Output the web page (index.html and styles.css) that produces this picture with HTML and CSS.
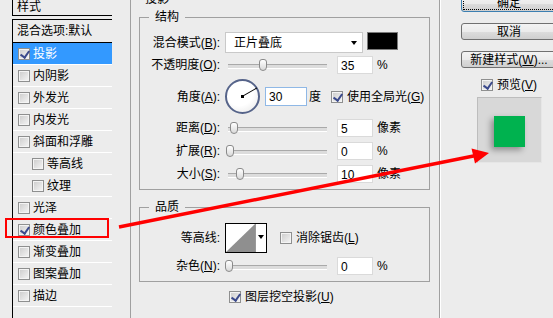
FILE: index.html
```html
<!DOCTYPE html>
<html lang="zh-CN">
<head>
    <meta charset="UTF-8">
    <title>图层样式</title>
    <link rel="stylesheet" href="styles.css">
</head>
<body>
    <div class="dialog">
        <!-- style list on the left -->
        <aside class="styles-col">
            <div class="styles-head">样式</div>
            <ul class="styles-list">
                <li class="blend">混合选项:默认</li>
                <li class="selected"><span class="cb checked"></span>投影</li>
                <li><span class="cb"></span>内阴影</li>
                <li><span class="cb"></span>外发光</li>
                <li><span class="cb"></span>内发光</li>
                <li><span class="cb"></span>斜面和浮雕</li>
                <li class="sub"><span class="cb"></span>等高线</li>
                <li class="sub"><span class="cb"></span>纹理</li>
                <li><span class="cb"></span>光泽</li>
                <li><span class="cb checked"></span>颜色叠加</li>
                <li><span class="cb"></span>渐变叠加</li>
                <li><span class="cb"></span>图案叠加</li>
                <li><span class="cb"></span>描边</li>
                <li></li>
            </ul>
        </aside>

        <!-- drop shadow settings -->
        <main class="settings">
            <fieldset class="group outer">
                <legend>投影</legend>
                <fieldset class="group structure">
                    <legend>结构</legend>
                    <div class="row r-mode">
                        <span class="lbl">混合模式(<u>B</u>):</span>
                        <span class="select">正片叠底<span class="arrow"></span></span>
                        <span class="swatch"></span>
                    </div>
                    <div class="row r-opacity">
                        <span class="lbl">不透明度(<u>O</u>):</span>
                        <span class="slider"><span class="thumb" style="left: 34px;"></span></span>
                        <span class="field">35</span>
                        <span class="unit">%</span>
                    </div>
                    <div class="row r-angle">
                        <span class="lbl">角度(<u>A</u>):</span>
                        <span class="dial"><span class="hand"></span><span class="dot"></span></span>
                        <span class="field wide focus">30</span>
                        <span class="unit deg">度</span>
                        <span class="cb checked"></span>
                        <span class="cb-text">使用全局光(<u>G</u>)</span>
                    </div>
                    <div class="row r-slide">
                        <span class="lbl">距离(<u>D</u>):</span>
                        <span class="slider"><span class="thumb" style="left: 5px;"></span></span>
                        <span class="field">5</span>
                        <span class="unit">像素</span>
                    </div>
                    <div class="row r-slide">
                        <span class="lbl">扩展(<u>R</u>):</span>
                        <span class="slider"><span class="thumb" style="left: 1px;"></span></span>
                        <span class="field">0</span>
                        <span class="unit">%</span>
                    </div>
                    <div class="row r-slide">
                        <span class="lbl">大小(<u>S</u>):</span>
                        <span class="slider"><span class="thumb" style="left: 11px;"></span></span>
                        <span class="field">10</span>
                        <span class="unit">像素</span>
                    </div>
                </fieldset>

                <fieldset class="group quality">
                    <legend>品质</legend>
                    <div class="row r-contour">
                        <span class="lbl">等高线:</span>
                        <span class="contour">
                            <span class="curve">
                                <svg width="29" height="28" viewBox="0 0 29 28"><polygon points="0,28 29,0 29,28" fill="#8f8f8f"/></svg>
                            </span>
                            <span class="drop"><span class="arrow"></span></span>
                        </span>
                        <span class="cb aa"></span>
                        <span class="cb-text">消除锯齿(<u>L</u>)</span>
                    </div>
                    <div class="row r-slide">
                        <span class="lbl">杂色(<u>N</u>):</span>
                        <span class="slider"><span class="thumb" style="left: 0px;"></span></span>
                        <span class="field">0</span>
                        <span class="unit">%</span>
                    </div>
                </fieldset>

                <div class="knockout">
                    <span class="cb checked"></span>
                    <span class="cb-text">图层挖空投影(<u>U</u>)</span>
                </div>
            </fieldset>
        </main>

        <!-- buttons and preview -->
        <div class="actions">
            <button class="btn default"><span>确定</span></button>
            <button class="btn">取消</button>
            <button class="btn">新建样式(<u>W</u>)...</button>
            <div class="preview-check">
                <span class="cb checked"></span>
                <span class="cb-text">预览(<u>V</u>)</span>
            </div>
            <div class="preview">
                <div class="chip"></div>
            </div>
        </div>
    </div>

    <!-- red annotation drawn over the dialog -->
    <div class="mark"></div>
    <svg class="annot" width="553" height="318" viewBox="0 0 553 318">
        <line x1="119" y1="227" x2="476" y2="155.5" stroke="#ff0000" stroke-width="3.5"/>
        <polygon points="471.5,148.5 489,153 475,163.5" fill="#ff0000"/>
    </svg>
</body>
</html>
```

FILE: styles.css
```css
* {
    box-sizing: border-box;
}

body {
    margin: 0;
    width: 553px;
    height: 318px;
    overflow: hidden;
    position: relative;
    background-color: #ececec;
    color: #000;
    font-family: "Liberation Sans", "Noto Sans CJK SC", sans-serif;
    font-size: 12px;
    line-height: 14px;
}

u {
    text-decoration: underline;
}

.dialog {
    display: flex;
    height: 318px;
}

/* left list */
.styles-col {
    width: 128px;
    flex: none;
    padding-left: 12px;
}

.styles-head {
    width: 100px;
    height: 16px;
    padding-left: 4px;
    border-left: 1px solid #000;
    border-bottom: 1px solid #000;
}

.styles-list {
    list-style: none;
    margin: 3px 0 0;
    padding: 0;
    width: 100px;
    border-top: 1px solid #000;
    border-left: 1px solid #000;
}

.styles-list li {
    display: flex;
    align-items: center;
    gap: 3px;
    height: 22px;
    padding-left: 5px;
    border-bottom: 1px solid #fff;
}

.styles-list li.blend {
    height: 23px;
    padding-left: 4px;
    border-bottom-color: #000;
}

.styles-list li.sub {
    padding-left: 19px;
}

.styles-list li.selected {
    background-color: #3399ff;
    color: #fff;
}

/* checkbox */
.cb {
    display: inline-block;
    flex: none;
    width: 12px;
    height: 12px;
    border: 1px solid #8e8f8f;
    background: linear-gradient(135deg, #cbcbcb, #f6f6f6);
    box-shadow: inset 0 0 0 1px #f4f4f4;
    position: relative;
}

.cb.checked::after {
    content: "";
    position: absolute;
    left: 3px;
    top: 0px;
    width: 4px;
    height: 7px;
    border-right: 2px solid #3b4a8c;
    border-bottom: 2px solid #3b4a8c;
    transform: rotate(35deg);
}

.cb-text {
    margin-left: 4px;
}

/* main settings */
.settings {
    width: 312px;
    flex: none;
}

.group {
    margin: 0;
    border: 1px solid #a0a0a0;
    min-width: 0;
}

.group legend {
    padding: 0 6px;
    line-height: 14px;
}

.outer {
    margin: -8px 0 0 2px;
    height: 340px;
    padding: 4px 9px 0 8px;
}

.outer > legend {
    margin-left: 0;
}

.structure,
.quality {
    padding: 8px 0 4px;
}

.structure > legend,
.quality > legend {
    margin-left: 9px;
}

.quality {
    margin-top: 10px;
    padding-bottom: 2px;
}

.row {
    display: flex;
    align-items: center;
    height: 23px;
}

.lbl {
    width: 80px;
    margin-right: 5px;
    text-align: right;
    flex: none;
}

.r-mode {
    height: 21px;
}

.r-opacity {
    height: 24px;
}

.r-angle {
    height: 39px;
}

.r-contour {
    height: 31px;
}

.r-slide:last-child {
    height: 26px;
}

.structure .r-slide:last-child {
    height: 23px;
}

.select {
    position: relative;
    width: 138px;
    height: 21px;
    padding: 3px 0 0 8px;
    background-color: #fff;
    border: 1px solid #c9c9c9;
}

.arrow {
    position: absolute;
    width: 0;
    height: 0;
    border-left: 3px solid transparent;
    border-right: 3px solid transparent;
    border-top: 4px solid #000;
}

.select .arrow {
    right: 5px;
    top: 8px;
}

.swatch {
    width: 31px;
    height: 18px;
    margin-left: 4px;
    background-color: #000;
    border: 1px solid #7a7a7a;
    align-self: flex-start;
}

.slider {
    position: relative;
    width: 102px;
    height: 14px;
    flex: none;
}

.slider::before {
    content: "";
    position: absolute;
    left: 3px;
    right: 0;
    top: 6px;
    height: 3px;
    border-top: 1px solid #a9a9a9;
    border-bottom: 1px solid #fff;
    background-color: #dcdcdc;
}

.thumb {
    position: absolute;
    top: 1px;
    width: 8px;
    height: 12px;
    border: 1px solid #8a8a8a;
    border-radius: 3px 3px 4px 4px;
    background: linear-gradient(#ffffff, #d9d9d9);
}

.field {
    width: 36px;
    height: 18px;
    margin-left: 10px;
    padding: 2px 0 0 3px;
    background-color: #fff;
    border: 1px solid #dadada;
    flex: none;
}

.field.wide {
    width: 42px;
    height: 19px;
    margin-left: 5px;
}

.field.focus {
    border-color: #8fb8e6;
}

.unit {
    margin-left: 4px;
}

.unit.deg {
    margin-left: 2px;
    margin-right: 10px;
}

.dial {
    position: relative;
    width: 35px;
    height: 35px;
    flex: none;
    border: 2px solid #56648a;
    border-radius: 50%;
    background: radial-gradient(circle at 40% 35%, #ffffff 50%, #e4e4e4);
}

.hand {
    position: absolute;
    left: 15px;
    top: 15px;
    width: 17px;
    height: 1px;
    background-color: #000;
    transform-origin: 0 0;
    transform: rotate(-30deg);
}

.dot {
    position: absolute;
    left: 14px;
    top: 14px;
    width: 3px;
    height: 3px;
    background-color: #000;
}

.contour {
    display: flex;
    width: 42px;
    height: 30px;
    border: 1px solid #000;
    background-color: #fff;
}

.curve {
    width: 29px;
    height: 28px;
}

.curve svg {
    display: block;
}

.drop {
    position: relative;
    width: 11px;
    border-left: 1px solid #9a9a9a;
}

.drop .arrow {
    left: 2px;
    top: 11px;
}

.cb.aa {
    margin-left: 13px;
}

.knockout {
    display: flex;
    align-items: center;
    height: 14px;
    margin: 8px 0 0 90px;
}

/* right column */
.actions {
    width: 113px;
    flex: none;
    margin-top: -5px;
    padding-left: 20px;
    border-left: 1px solid #fff;
}

.btn {
    display: block;
    width: 96px;
    height: 17px;
    margin-bottom: 11px;
    padding: 0;
    font: inherit;
    line-height: 14px;
    color: #000;
    border: 1px solid #707070;
    border-radius: 3px;
    background: linear-gradient(#f3f3f3 0%, #ebebeb 50%, #dddddd 51%, #cfcfcf 100%);
}

.btn.default {
    border-color: #3c7fb1;
    padding: 1px;
}

.btn.default span {
    display: block;
    height: 13px;
    border: 1px dotted #000;
    line-height: 11px;
}

.preview-check {
    display: flex;
    align-items: center;
    height: 14px;
    margin: -1px 0 0 20px;
}

.preview {
    width: 65px;
    height: 66px;
    margin: 5px 0 0 16px;
    padding: 18px 0 0 16px;
    background-color: #d8d8d8;
    border: 1px solid #bdbdbd;
    border-right-color: #e6e6e6;
    border-bottom-color: #e6e6e6;
}

.chip {
    width: 31px;
    height: 31px;
    background-color: #00b24f;
    box-shadow: -3px 3px 6px rgba(0, 0, 0, 0.35);
}

/* annotation overlay */
.mark {
    position: absolute;
    left: 5px;
    top: 218px;
    width: 104px;
    height: 20px;
    border: 2px solid #ff0000;
}

.annot {
    position: absolute;
    left: 0;
    top: 0;
    pointer-events: none;
}
```
